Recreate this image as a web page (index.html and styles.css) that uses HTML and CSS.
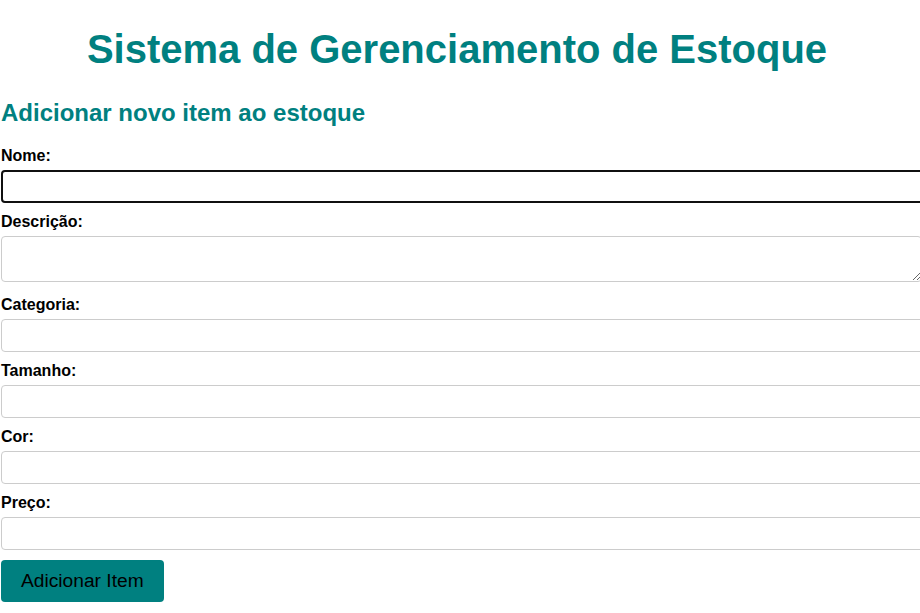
FILE: index.html
```html
<!DOCTYPE html>
<html lang="pt-BR">
<head>
<meta charset="utf-8">
<title>Sistema de Gerenciamento de Estoque</title>
<link rel="stylesheet" href="styles.css">
</head>
<body>
<h1 class="title">Sistema de Gerenciamento de Estoque</h1>
<h2 class="subtitle">Adicionar novo item ao estoque</h2>
<form class="item-form">
  <label class="field-label" for="nome">Nome:</label>
  <input class="field-input is-focused" type="text" id="nome">
  <label class="field-label" for="descricao">Descrição:</label>
  <textarea class="field-input field-textarea" id="descricao"></textarea>
  <label class="field-label" for="categoria">Categoria:</label>
  <input class="field-input" type="text" id="categoria">
  <label class="field-label" for="tamanho">Tamanho:</label>
  <input class="field-input" type="text" id="tamanho">
  <label class="field-label" for="cor">Cor:</label>
  <input class="field-input" type="text" id="cor">
  <label class="field-label" for="preco">Preço:</label>
  <input class="field-input" type="text" id="preco">
  <button class="submit-btn" type="button">Adicionar Item</button>
</form>
</body>
</html>
```
FILE: styles.css
```css
html {
  overflow-x: hidden;
}
body {
  margin: 0;
  padding-left: 1px;
  font-family: "Liberation Sans", Arial, sans-serif;
  color: #000;
  background: #fff;
}
.title {
  font-size: 40px;
  color: #008080;
  text-align: center;
  margin: 27px 7px 27px 0;
}
.subtitle {
  font-size: 24px;
  color: #008080;
  margin: 20px 0;
}
.item-form {
  display: block;
}
.field-label {
  display: block;
  font-size: 16px;
  font-weight: bold;
  margin-bottom: 5px;
}
.field-input {
  display: block;
  width: 100%;
  padding: 8px;
  margin: 0 0 10px;
  border: 1px solid #ccc;
  border-radius: 4px;
  font-family: "Liberation Sans", Arial, sans-serif;
  font-size: 13.333px;
  line-height: 15px;
  background: #fff;
}
.field-textarea {
  box-sizing: border-box;
  width: calc(100% + 2px);
  height: 46px;
  margin-bottom: 14px;
  resize: both;
}
.is-focused {
  outline: 2px solid #101010;
  outline-offset: -2px;
}
.submit-btn {
  display: inline-block;
  background: #008080;
  color: #000;
  border: none;
  border-radius: 4px;
  padding: 10px 20px;
  font-family: "Liberation Sans", Arial, sans-serif;
  font-size: 19.2px;
  line-height: 22px;
}
```
